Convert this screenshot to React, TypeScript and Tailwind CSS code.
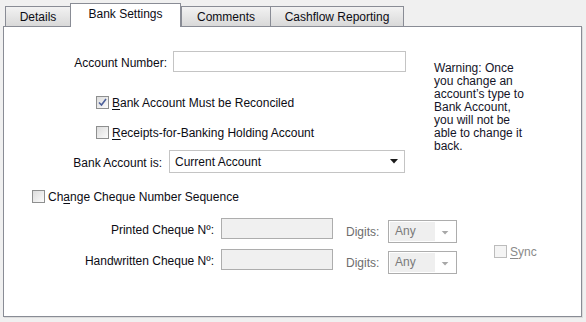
import type { ReactNode } from 'react';

function Check({ checked = false, disabled = false }: { checked?: boolean; disabled?: boolean }) {
  return (
    <span
      className={`w-[13px] h-[13px] shrink-0 border flex items-center justify-center ${
        disabled ? 'border-[#bcbcbc] bg-[#f4f4f4]' : 'border-[#8e8f8f] bg-gradient-to-br from-[#dcdcdc] to-[#fbfbfb]'
      }`}
    >
      {checked && (
        <svg width="9" height="9" viewBox="0 0 9 9">
          <path d="M1 4.5 L3.5 7 L8 1" fill="none" stroke="#4c5f9a" strokeWidth="1.6" />
        </svg>
      )}
    </span>
  );
}

function Tab({ label, width, active = false }: { label: string; width: string; active?: boolean }) {
  if (active) {
    return (
      <div
        className={`${width} h-[24px] -mb-px relative z-10 bg-white border border-b-0 border-[#898c95] flex items-start justify-center pt-[4px]`}
      >
        {label}
      </div>
    );
  }
  return (
    <div
      className={`${width} h-[20px] bg-gradient-to-b from-[#f2f2f2] to-[#d9d9d9] border border-b-0 border-[#898c95] flex items-center justify-center pt-px`}
    >
      {label}
    </div>
  );
}

function U({ children }: { children: ReactNode }) {
  return <span className="underline underline-offset-2">{children}</span>;
}

function CheckRow({ children, checked, className }: { children: ReactNode; checked?: boolean; className: string }) {
  return (
    <div className={`flex items-center gap-[3px] h-[13px] ${className}`}>
      <Check checked={checked} />
      <span className="translate-y-px">{children}</span>
    </div>
  );
}

function DigitsSelect() {
  return (
    <div className="w-[69px] h-[23px] mt-[2px] border border-[#adadad] bg-white flex items-center p-px">
      <div className="w-[47px] h-full bg-[#efefef] text-[#7a7a7a] pl-[5px] flex items-center">Any</div>
      <svg width="20" height="10" viewBox="0 0 20 10" className="ml-[1px]">
        <path d="M6 4 L13 4 L9.5 7.5 Z" fill="#a8a8a8" />
      </svg>
    </div>
  );
}

function ChequeRow({ label }: { label: string }) {
  return (
    <div className="flex items-start h-[21px]">
      <div className="w-[210px] h-[21px] text-right flex items-center justify-end pt-[3px]">{label}</div>
      <div className="ml-[7px] w-[112px] h-[21px] border border-[#adadad] bg-[#f0f0f0]" />
      <div className="ml-[13px] w-[42px] h-[23px] mt-[2px] flex items-center text-[#6d6d6d] pt-px">Digits:</div>
      <DigitsSelect />
    </div>
  );
}

export default function App() {
  return (
    <div className="w-[586px] h-[322px] bg-[#f0f0f0] pt-[3px] pl-[3px] font-['Liberation_Sans',Arial,sans-serif] text-[12px] leading-[13px] text-[#0c0c14]">
      <div className="flex items-end h-[23px] pl-[2px]">
        <Tab label="Details" width="w-[66px]" />
        <div className="-ml-px">
          <Tab label="Bank Settings" width="w-[111px]" active />
        </div>
        <Tab label="Comments" width="w-[90px]" />
        <div className="-ml-px">
          <Tab label="Cashflow Reporting" width="w-[134px]" />
        </div>
      </div>

      <div className="w-[579px] h-[291px] bg-white border border-[#898c95] shadow-[1px_1px_0_#dcdcdc]">
        <div className="flex">
          <div className="w-[420px] pt-[24px]">
            <div className="flex items-center h-[21px]">
              <div className="w-[163px] text-right pt-[4px]">Account Number:</div>
              <div className="ml-[6px] w-[233px] h-[21px] border border-[#c4c4c4] bg-white" />
            </div>

            <CheckRow checked className="ml-[92px] mt-[24px]">
              <U>B</U>ank Account Must be Reconciled
            </CheckRow>

            <CheckRow className="ml-[92px] mt-[17px]">
              <U>R</U>eceipts-for-Banking Holding Account
            </CheckRow>

            <div className="flex items-center h-[23px] mt-[11px]">
              <div className="w-[158px] text-right pt-[3px]">Bank Account is:</div>
              <div className="ml-[7px] w-[236px] h-[23px] border border-[#c4c4c4] bg-white flex items-center justify-between pl-[5px] pr-[6px]">
                <span className="translate-y-px">Current Account</span>
                <svg width="8" height="5" viewBox="0 0 8 5">
                  <path d="M0 0 L8 0 L4 4.5 Z" fill="#1a1a1a" />
                </svg>
              </div>
            </div>
          </div>

          <div className="ml-[10px] pt-[35px] text-[#141428] leading-[13px]">
            Warning: Once
            <br />
            you change an
            <br />
            account’s type to
            <br />
            Bank Account,
            <br />
            you will not be
            <br />
            able to change it
            <br />
            back.
          </div>
        </div>

        <CheckRow className="ml-[28px] mt-[17px]">
          Ch<U>a</U>nge Cheque Number Sequence
        </CheckRow>

        <div className="flex mt-[15px]">
          <div className="flex flex-col gap-[10px]">
            <ChequeRow label="Printed Cheque Nº:" />
            <ChequeRow label="Handwritten Cheque Nº:" />
          </div>
          <div className="flex items-center gap-[3px] ml-[37px] mt-[27px] h-[13px] text-[#8a8a8a]">
            <Check disabled />
            <span className="translate-y-px">
              <U>S</U>ync
            </span>
          </div>
        </div>
      </div>
    </div>
  );
}
